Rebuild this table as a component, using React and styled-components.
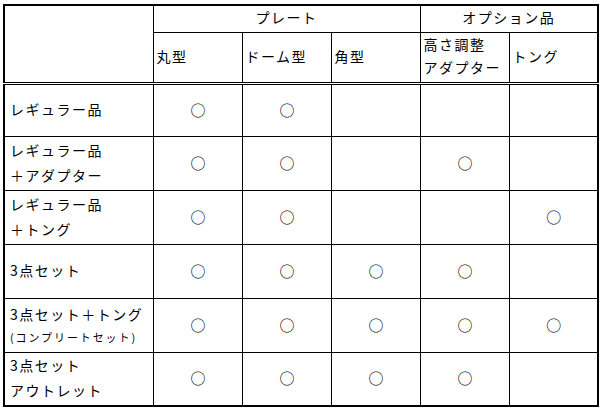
import React from 'react';
import styled, { createGlobalStyle } from 'styled-components';

const GlobalStyle = createGlobalStyle`
  html, body {
    margin: 0;
    padding: 0;
    background: #fff;
  }
  body {
    font-family: "Noto Sans CJK JP", "Noto Sans", sans-serif;
    color: #000;
  }
`;

const Page = styled.div`
  padding: 4px 0 0 3px;
`;

const Table = styled.table`
  border-collapse: collapse;
  table-layout: fixed;
  width: 594px;
  border: 2px solid #000;
  font-size: 14px;
  letter-spacing: 1.5px;
`;

const HeadCell = styled.td`
  border: 1px solid #000;
  border-bottom: ${p => (p.$last ? '3px double #000' : '1px solid #000')};
  height: ${p => p.$h}px;
  padding: 0 3px 3px;
  text-align: ${p => (p.$center ? 'center' : 'left')};
  vertical-align: middle;
  line-height: 23px;
  white-space: nowrap;
`;

const Cell = styled.td`
  border: 1px solid #000;
  height: ${p => p.$h}px;
  padding: 0 4px 2px 5px;
  vertical-align: middle;
  text-align: ${p => (p.$label ? 'left' : 'center')};
  line-height: 25px;
  white-space: nowrap;
`;

const Small = styled.span`
  display: block;
  font-size: 11px;
  letter-spacing: 1.9px;
  line-height: 20px;
`;

const Mark = styled.span`
  display: inline-block;
  font-size: 15px;
  letter-spacing: 0;
`;

const rows = [
  { label: ['レギュラー品'], marks: [1, 1, 0, 0, 0], h: 49 },
  { label: ['レギュラー品', '＋アダプター'], marks: [1, 1, 0, 1, 0], h: 51 },
  { label: ['レギュラー品', '＋トング'], marks: [1, 1, 0, 0, 1], h: 51 },
  { label: ['3点セット'], marks: [1, 1, 1, 1, 0], h: 51 },
  { label: ['3点セット＋トング'], small: '(コンプリートセット)', marks: [1, 1, 1, 1, 1], h: 51 },
  { label: ['3点セット', 'アウトレット'], marks: [1, 1, 1, 1, 0], h: 49 },
];

export default function App() {
  return (
    <Page>
      <GlobalStyle />
      <Table>
        <colgroup>
          <col style={{ width: 149 }} />
          <col style={{ width: 89 }} />
          <col style={{ width: 89 }} />
          <col style={{ width: 89 }} />
          <col style={{ width: 89 }} />
          <col style={{ width: 89 }} />
        </colgroup>
        <tbody>
          <tr>
            <HeadCell rowSpan={2} $last $h={23} />
            <HeadCell colSpan={3} $center $h={23}>プレート</HeadCell>
            <HeadCell colSpan={2} $center $h={23}>オプション品</HeadCell>
          </tr>
          <tr>
            <HeadCell $last $h={46}>丸型</HeadCell>
            <HeadCell $last $h={46}>ドーム型</HeadCell>
            <HeadCell $last $h={46}>角型</HeadCell>
            <HeadCell $last $h={46}>高さ調整<br />アダプター</HeadCell>
            <HeadCell $last $h={46}>トング</HeadCell>
          </tr>
          {rows.map((r, i) => (
            <tr key={i}>
              <Cell $label $h={r.h}>
                {r.label.map((t, j) => (
                  <React.Fragment key={j}>
                    {j > 0 && <br />}
                    {t}
                  </React.Fragment>
                ))}
                {r.small && <Small>{r.small}</Small>}
              </Cell>
              {r.marks.map((m, j) => (
                <Cell key={j} $h={r.h}>
                  {m ? <Mark>○</Mark> : null}
                </Cell>
              ))}
            </tr>
          ))}
        </tbody>
      </Table>
    </Page>
  );
}
